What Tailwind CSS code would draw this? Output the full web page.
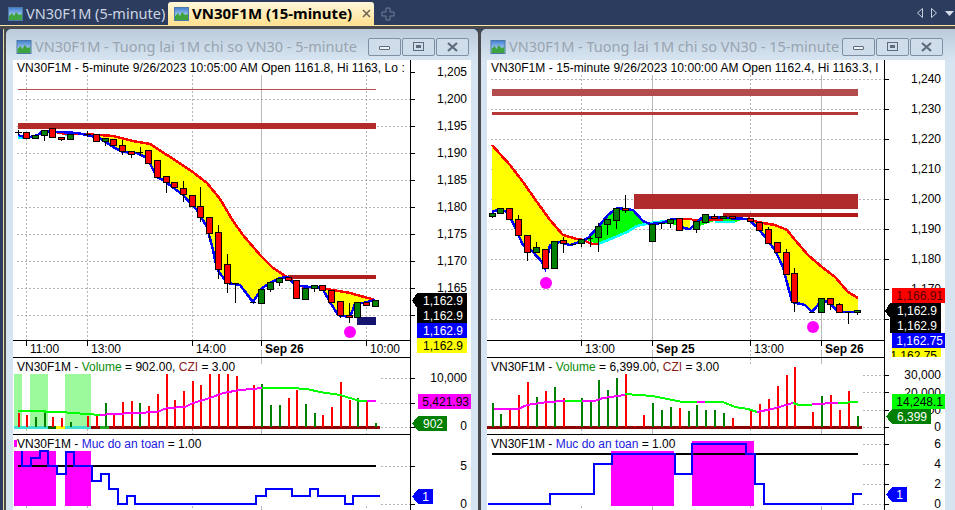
<!DOCTYPE html>
<html>
<head>
<meta charset="utf-8">
<script src="https://cdn.jsdelivr.net/npm/@tailwindcss/browser@4"></script>
</head>
<body class="m-0 overflow-hidden bg-[#2c3c5e]">
<div class="flex h-[510px] w-[955px] flex-col overflow-hidden font-['Liberation_Sans',sans-serif] text-black">

  <!-- document tabs -->
  <div class="flex h-[25px] shrink-0 items-end bg-[#2c3c5e] font-['Noto_Sans',sans-serif] text-[15px] leading-none">
    <div class="flex h-[23px] w-[168px] items-center gap-[3px] pl-[8px] text-[14.5px] whitespace-nowrap text-[#ccd6e3]">
      <svg width="15" height="14" viewBox="0 0 15 14" class="shrink-0"><defs><linearGradient id="sky" x1="0" y1="0" x2="0" y2="1"><stop offset="0" stop-color="#3f7fd0"/><stop offset="1" stop-color="#e8f4ff"/></linearGradient></defs><rect x=".5" y=".5" width="14" height="13" fill="url(#sky)" stroke="#4a78a8"/><path d="M1 13V9l3-3 2 3 2-4 3 3 3-1v6z" fill="#3fa43f"/></svg>
      <span>VN30F1M (5-minute)</span>
    </div>
    <div class="flex h-[23px] w-[206px] items-center gap-[3px] rounded-t-[3px] bg-gradient-to-b from-[#fff7dc] to-[#ffe08f] pl-[6px] font-bold whitespace-nowrap">
      <svg width="15" height="14" viewBox="0 0 15 14" class="shrink-0"><rect x=".5" y=".5" width="14" height="13" fill="url(#sky)" stroke="#4a78a8"/><path d="M1 13V9l3-3 2 3 2-4 3 3 3-1v6z" fill="#3fa43f"/></svg>
      <span>VN30F1M (15-minute)</span>
      <svg width="9" height="9" viewBox="0 0 9 9" class="ml-[7px] shrink-0"><path d="M1 1l7 7M8 1L1 8" stroke="#6b6450" stroke-width="1.5"/></svg>
    </div>
    <svg width="14" height="14" viewBox="0 0 14 14" class="mb-[4px] ml-[7px] shrink-0"><path d="M5 1h4v4h4v4H9v4H5V9H1V5h4z" fill="none" stroke="#6f7d95"/></svg>
    <div class="mb-[7px] ml-auto flex items-center gap-[8px] pr-[1px]">
      <svg width="6" height="10" viewBox="0 0 6 10"><path d="M5.5 .5v9L.5 5z" fill="none" stroke="#c8d2de"/></svg>
      <svg width="6" height="10" viewBox="0 0 6 10"><path d="M.5 .5v9l5-4.500z" fill="none" stroke="#c8d2de"/></svg>
      <svg width="9" height="5" viewBox="0 0 9 5"><path d="M0 0h9L4.500 5z" fill="#d5dde8"/></svg>
    </div>
  </div>
  <div class="h-px shrink-0 bg-[#ffe8a6]"></div>
  <div class="h-[3px] shrink-0 bg-[#4a4a4c]"></div>

  <div class="flex min-h-0 flex-1">
    <div class="w-[3px] shrink-0 bg-[#2c3c5e]"></div>
    <div class="w-px shrink-0 bg-[#e8d9a8]"></div>
    <div class="w-[2px] shrink-0 bg-[#4a4a4c]"></div>

    <!-- 5-minute window -->
    <div class="flex h-full w-[472px] shrink-0 flex-col rounded-tl-[5px] rounded-tr-[5px] bg-gradient-to-b from-[#bccbda] to-[#d6e4f1] to-[30px] px-[7px]">
      <div class="flex h-[31px] shrink-0 items-center pt-[4px]">
        <svg width="16" height="14" viewBox="0 0 15 14" class="ml-[3px] mr-[3px] shrink-0"><rect x=".5" y=".5" width="14" height="13" fill="url(#sky)" stroke="#4a78a8"/><path d="M1 13V9l3-3 2 3 2-4 3 3 3-1v6z" fill="#3fa43f"/></svg>
        <span class="font-['Noto_Sans',sans-serif] text-[14.5px] leading-none whitespace-nowrap text-[#98a4b0]">VN30F1M - Tuong lai 1M chi so VN30 - 5-minute</span>
        <div class="ml-auto flex gap-px pr-[2px]">
          <div class="flex h-[18px] w-[33px] items-center justify-center rounded-[2px] border border-[#7f90a4] bg-[#cfdcea]"><div class="mt-[3px] h-[4px] w-[11px] rounded-[1px] border border-[#5d6b7c] bg-[#eef3f8]"></div></div>
          <div class="flex h-[18px] w-[33px] items-center justify-center rounded-[2px] border border-[#7f90a4] bg-[#cfdcea]"><div class="flex h-[9px] w-[11px] items-center justify-center border border-[#5d6b7c]"><div class="h-[3px] w-[5px] bg-[#5d6b7c]"></div></div></div>
          <div class="flex h-[18px] w-[33px] items-center justify-center rounded-[2px] border border-[#7f90a4] bg-[#cfdcea]"><svg width="13" height="10" viewBox="0 0 13 10"><path d="M2 1l9 8M11 1L2 9" stroke="#5d6b7c" stroke-width="2.200"/></svg></div>
        </div>
      </div>
      <svg width="458" height="450" viewBox="13 60 458 450" shape-rendering="crispEdges" class="block shrink-0 bg-white text-[12px]">
        <g fill="none" stroke="#b4b4b4" stroke-dasharray="2 2">
          <path d="M17 99.500H410M17 126.500H410M17 153.500H410M17 180.500H410M17 207.500H410M17 234.500H410M17 261.500H410M17 288.500H410M17 315.500H410"/>
          <path d="M26.500 75V340M87.500 75V340M192.500 75V340M366.500 75V340"/>
          <path d="M26.500 429V434M87.500 429V434M192.500 429V434M366.500 429V434M26.500 506V510M87.500 506V510M192.500 506V510M366.500 506V510"/>
          <path d="M381 378.500H410M381 403.500H410M381 427.500H410M381 466.500H410M381 504.500H410"/>
        </g>
        <path d="M261.500 75V340M261.500 350V364M261.500 429V434M261.500 506V510" stroke="#b8b8b8" fill="none"/>
        <text x="17" y="72" class="tracking-[0.05px]">VN30F1M - 5-minute 9/26/2023 10:05:00 AM Open 1161.8, Hi 1163, Lo :</text>
        <rect x="18" y="89" width="358" height="1" fill="#b35050"/>
        <rect x="18" y="123" width="358" height="6" fill="#b22a2a"/>
        <rect x="288" y="275" width="88" height="4" fill="#b01e1e"/>
        <rect x="357" y="317" width="19" height="8" fill="#14146e"/>
        <polygon points="57,133 77,134 100,135 113,136 133,141 150,144 167,155 190,170 207,183 220,199 233,221 243,235 260,255 273,268 287,277 300,286 327,289 350,293 375,300 363,303 355,304 350,317 338,315 330,302 322,288 300,286 293,283 288,277 280,278 270,283 262,288 253,302 240,285 227,283 217,269 213,250 207,227 197,210 183,195 163,180 157,177 147,158 137,153 123,152 113,147 100,138 87,135 77,133" fill="#ffff00"/>
        <polygon points="18,135 27,138 23,139 18,139" fill="#00ffff"/>
        <polygon points="38,135 43,131 50,132 45,135" fill="#00ff00"/>
        <polygon points="60,134 76,133 76,135 66,136" fill="#00ffff"/>
        <polyline points="57,133 77,134 100,135 113,136 133,141 150,144 167,155 190,170 207,183 220,199 233,221 243,235 260,255 273,268 287,277 300,286 327,289 350,293 375,300" fill="none" stroke="#ff0000" stroke-width="2.500"/>
        <polyline points="18,135 27,138 38,135 43,131 77,133 87,135 100,138 113,147 123,152 137,153 147,158 157,177 163,180 183,195 197,210 207,227 213,250 217,269 227,283 240,285 253,302 262,288 270,283 280,278 288,277 293,283 300,286 322,288 330,302 338,315 350,317 355,304 363,303 375,300" fill="none" stroke="#0000ff" stroke-width="2.500"/>
        <path d="M15 132.500H22M18.500 130V135M84 134.500H91M87.500 131V137M136 152.500H143M140.500 147V156M232 283.500H239M235.500 283V303M250 302.500H256M44.500 135V141M61.500 139V141M105.500 141V146M122.500 140V155M131.500 154V158M166.500 182V193M183.500 181V202M200.500 187V222M209.500 233V240M218.500 225V279M227.500 254V293M270.500 289V292M279.500 282V286M314.500 288V292M340.500 315V318M349.500 303V323" stroke="#000" fill="none"/>
        <path d="M23.500 132.500h6v6h-6zM49.500 128.500h6v9h-6zM58.500 137.500h6v2h-6zM93.500 134.500h6v7h-6zM110.500 139.500h6v6h-6zM119.500 145.500h6v6h-6zM128.500 151.500h6v3h-6zM145.500 150.500h6v13h-6zM154.500 160.500h6v17h-6zM163.500 176.500h6v6h-6zM171.500 182.500h6v5h-6zM180.500 188.500h6v6h-6zM189.500 195.500h6v11h-6zM197.500 206.500h6v11h-6zM206.500 217.500h6v16h-6zM215.500 232.500h6v37h-6zM224.500 264.500h6v19h-6zM285.500 277.500h6v3h-6zM293.500 280.500h6v18h-6zM319.500 285.500h6v5h-6zM328.500 290.500h6v12h-6zM337.500 301.500h6v14h-6zM346.500 315.500h6v2h-6zM363.500 302.500h6v3h-6z" fill="#ff0000" stroke="#000"/>
        <path d="M32.500 135.500h6v3h-6zM41.500 130.500h6v5h-6zM67.500 134.500h6v5h-6zM102.500 138.500h6v3h-6zM258.500 289.500h6v14h-6zM267.500 282.500h6v7h-6zM276.500 278.500h6v4h-6zM302.500 288.500h6v11h-6zM311.500 285.500h6v3h-6zM354.500 302.500h6v15h-6zM372.500 300.500h6v6h-6z" fill="#008000" stroke="#000"/>
        <circle cx="350" cy="332" r="6" fill="#ff00ff" shape-rendering="auto"/>

        <!-- date axis -->
        <path d="M13 340.500H410M13 357.500H410M13 434.500H410M410.500 60V510" stroke="#000" fill="none"/>
        <path d="M26.500 340V346M87.500 340V346M192.500 340V346M261.500 340V346M366.500 340V346" stroke="#000"/>
        <text x="30" y="353">11:00</text><text x="91" y="353">13:00</text><text x="196" y="353">14:00</text><text x="265" y="353" font-weight="700">Sep 26</text><text x="370" y="353">10:00</text>

        <!-- price axis -->
        <path d="M410 72.500h5M410 99.500h5M410 126.500h5M410 153.500h5M410 180.500h5M410 207.500h5M410 234.500h5M410 261.500h5M410 288.500h5M410 315.500h5M410 378.500h5M410 403.500h5M410 427.500h5M410 466.500h5M410 504.500h5" stroke="#000"/>
        <g text-anchor="end">
          <text x="467" y="76">1,205</text><text x="467" y="103">1,200</text><text x="467" y="130">1,195</text><text x="467" y="157">1,190</text><text x="467" y="184">1,185</text><text x="467" y="211">1,180</text><text x="467" y="238">1,175</text><text x="467" y="265">1,170</text><text x="467" y="292">1,165</text>
          <polygon points="412,300.500 417,293 467,293 467,323 417,323 417,308" fill="#000"/>
          <rect x="417" y="323" width="50" height="15" fill="#0000ff"/>
          <rect x="417" y="338" width="50" height="15" fill="#ffff00"/>
          <text x="463" y="305" fill="#fff">1,162.9</text><text x="463" y="320" fill="#fff">1,162.9</text><text x="463" y="335" fill="#fff">1,162.9</text><text x="463" y="350">1,162.9</text>
          <text x="467" y="382">10,000</text>
          <text x="467" y="430">0</text>
          <rect x="418" y="394" width="53" height="15" fill="#ff00ff"/>
          <text x="469" y="406">5,421.93</text>
          <polygon points="412,423.500 418,416 447,416 447,431 418,431" fill="#008000"/>
          <text x="443" y="428" fill="#fff">902</text>
          <text x="467" y="470">5</text>
          <text x="467" y="508">0</text>
          <polygon points="412,496.500 418,489 433,489 433,504 418,504" fill="#0000ff"/>
          <text x="429" y="501" fill="#fff">1</text>
        </g>

        <!-- volume pane -->
        <path d="M14 374h8v53h-8zM30 374h18v53H30zM65 374h26v53H65z" fill="#9cf99c"/>
        <text x="17" y="371">VN30F1M - <tspan fill="#0a8a0a">Volume</tspan> = 902.00, <tspan fill="#8b1a1a">CZI</tspan> = 3.00</text>
        <rect x="14" y="426" width="366" height="3" fill="#8b0000"/>
        <path d="M14 426h16v3H14zM30 426h18v3H30zM65 426h26v3H65z" fill="#40e0d0"/>
        <rect x="48" y="426" width="8" height="3" fill="#006400"/>
        <rect x="56" y="426" width="9" height="3" fill="#ffff00"/>
        <rect x="100" y="426" width="9" height="3" fill="#22a822"/>
        <path d="M19 413V427M27 415V427M53 417V427M62 418V427M88 416V427M97 414V427M114 415V427M123 402V427M132 401V427M149 406V427M158 394V427M167 374V427M175 400V427M184 391V427M193 381V427M201 385V427M210 374V427M219 374V427M228 374V427M237 376V427M254 385V427M289 398V427M297 390V427M323 415V427M332 407V427M341 382V427M350 400V427M367 400V427" stroke="#ff0000" stroke-width="2"/>
        <path d="M36 417V427M45 411V427M71 422V427M106 403V427M140 403V427M262 384V427M271 405V427M280 405V427M306 404V427M315 413V427M358 398V427M376 423V427" stroke="#008000" stroke-width="2"/>
        <polyline points="18,411 45,411 45,412 62,412 71,413 88,414 100,415" fill="none" stroke="#00ff00" stroke-width="2"/>
        <polyline points="100,415 113,414 157,412 167,408 185,407 193,403 210,398 223,393 240,390 253,389 262,388" fill="none" stroke="#ff00ff" stroke-width="2"/>
        <polyline points="262,388 290,388 307,389 320,392 340,395 360,401 367,401" fill="none" stroke="#00ff00" stroke-width="2"/>
        <polyline points="367,401 376,401" fill="none" stroke="#ff00ff" stroke-width="2"/>

        <!-- safety pane -->
        <path d="M14 451h42v55H14zM65 451h26v55H65zM14 440h3v7h-3z" fill="#ff00ff"/>
        <text x="17" y="448">VN30F1M - <tspan fill="#2020e0">Muc do an toan</tspan> = 1.00</text>
        <rect x="18" y="465" width="358" height="2" fill="#000"/>
        <path d="M22 451V466H31V458H40V451H48V466H57V474H66V452H74V466H92V481H101V474H109V489H118V504H127V496H135V504H256V496H266V489H292V496H310V489H318V496H345V504H353V496H380" fill="none" stroke="#0000ff" stroke-width="2.500"/>
      </svg>
    </div>

    <div class="w-[3px] shrink-0 bg-[#4a4a4c]"></div>

    <!-- 15-minute window -->
    <div class="flex h-full w-[474px] shrink-0 flex-col rounded-tl-[5px] bg-gradient-to-b from-[#bccbda] to-[#d6e4f1] to-[30px] pl-[6px] pr-[10px]">
      <div class="flex h-[31px] shrink-0 items-center pt-[4px]">
        <svg width="16" height="14" viewBox="0 0 15 14" class="ml-[3px] mr-[3px] shrink-0"><rect x=".5" y=".5" width="14" height="13" fill="url(#sky)" stroke="#4a78a8"/><path d="M1 13V9l3-3 2 3 2-4 3 3 3-1v6z" fill="#3fa43f"/></svg>
        <span class="font-['Noto_Sans',sans-serif] text-[14.5px] leading-none whitespace-nowrap text-[#98a4b0]">VN30F1M - Tuong lai 1M chi so VN30 - 15-minute</span>
        <div class="ml-auto flex gap-px pr-[2px]">
          <div class="flex h-[18px] w-[33px] items-center justify-center rounded-[2px] border border-[#7f90a4] bg-[#cfdcea]"><div class="mt-[3px] h-[4px] w-[11px] rounded-[1px] border border-[#5d6b7c] bg-[#eef3f8]"></div></div>
          <div class="flex h-[18px] w-[33px] items-center justify-center rounded-[2px] border border-[#7f90a4] bg-[#cfdcea]"><div class="flex h-[9px] w-[11px] items-center justify-center border border-[#5d6b7c]"><div class="h-[3px] w-[5px] bg-[#5d6b7c]"></div></div></div>
          <div class="flex h-[18px] w-[33px] items-center justify-center rounded-[2px] border border-[#7f90a4] bg-[#cfdcea]"><svg width="13" height="10" viewBox="0 0 13 10"><path d="M2 1l9 8M11 1L2 9" stroke="#5d6b7c" stroke-width="2.200"/></svg></div>
        </div>
      </div>
      <svg width="458" height="450" viewBox="487 60 458 450" shape-rendering="crispEdges" class="block shrink-0 bg-white text-[12px]">
        <g fill="none" stroke="#b4b4b4" stroke-dasharray="2 2">
          <path d="M491 79.500H884M491 109.500H884M491 139.500H884M491 169.500H884M491 199.500H884M491 229.500H884M491 259.500H884M491 289.500H884M491 319.500H884"/>
          <path d="M581.500 75V340M750.500 75V340"/>
          <path d="M581.500 429V434M750.500 350V364M750.500 429V434M581.500 506V510M750.500 506V510"/>
          <path d="M863 375.500H884M863 392.500H884M863 410.500H884M863 427.500H884M863 444.500H884M863 464.500H884M863 484.500H884M863 504.500H884"/>
        </g>
        <path d="M652.500 75V340M821.500 75V340M652.500 350V364M821.500 350V364M652.500 429V434M821.500 429V434M652.500 506V510M821.500 506V510" stroke="#b8b8b8" fill="none"/>
        <text x="491" y="72" class="tracking-[0.05px]">VN30F1M - 15-minute 9/26/2023 10:00:00 AM Open 1162.4, Hi 1163.3, l</text>
        <rect x="492" y="89" width="366" height="7" fill="#b34d4d"/>
        <rect x="492" y="112" width="366" height="3" fill="#b83838"/>
        <rect x="634" y="194" width="224" height="15" fill="#b02c2c"/>
        <rect x="723" y="213" width="135" height="4" fill="#b31818"/>
        <polygon points="492,145 500,154 510,165 523,182 537,202 550,220 563,235 577,239 585,241 580,242 570,245 560,242 550,245 545,268 542,262 533,252 523,245 513,223 507,212 500,209 492,212" fill="#ffff00"/>
        <polygon points="588,238 598,227 608,215 617,208 633,210 643,221 650,224 637,226 627,232 613,238 598,244 588,241" fill="#00ff00"/>
        <polygon points="650,224 662,223 672,219 683,219 683,228 672,224" fill="#00ff00"/>
        <rect x="683" y="219" width="7" height="10" fill="#ffff00"/>
        <polygon points="690,229 697,222 703,217 720,217 748,218 735,222 723,222 715,221" fill="#00ff00"/>
        <polygon points="748,218 757,222 775,225 787,230 795,240 808,255 822,267 835,277 848,292 858,298 858,312 838,312 830,303 822,300 812,312 805,305 792,302 783,267 775,250 758,228" fill="#ffff00"/>
        <polyline points="598,244 613,238 627,232 637,226 650,223 667,221" fill="none" stroke="#00ffff" stroke-width="2.500"/>
        <polyline points="715,222 735,222" fill="none" stroke="#00ffff" stroke-width="2"/>
        <polyline points="492,145 500,154 510,165 523,182 537,202 550,220 563,235 577,239 583,240 592,244 598,244" fill="none" stroke="#ff0000" stroke-width="2.500"/>
        <polyline points="683,219 700,220 723,220" fill="none" stroke="#ff0000" stroke-width="2"/>
        <polyline points="748,218 757,222 775,225 787,230 795,240 808,255 822,267 835,277 848,292 858,298" fill="none" stroke="#ff0000" stroke-width="2.500"/>
        <polyline points="492,212 500,209 507,212 513,223 523,245 533,252 542,262 545,268 550,245 560,242 570,245 580,242 588,238 598,227 608,215 617,208 633,210 643,221 650,224 662,223 672,219 680,219 683,228 690,229 697,222 703,217 748,219 758,228 775,250 783,267 792,302 805,305 812,312 822,300 830,303 838,312 858,312" fill="none" stroke="#0000ff" stroke-width="2.500"/>
        <path d="M492.500 216V218M527.500 252V261M518.500 215V219M536.500 242V248M563.500 237V253M570 244.500H576M587 238.500H593M590.500 236V247M581.500 243V247M598.500 223V252M607.500 224V235M616.500 220V229M625.500 195V213M658 223.500H665M661.500 223V229M670.500 223V228M696.500 229V233M714.500 214V219M768.500 227V230M786.500 249V253M794.500 268V312M809 312.500H815M830.500 304V310M839.500 303V305M845 312.500H851M848.500 312V324M857.500 312V315" stroke="#000" fill="none"/>
        <path d="M506.500 208.500h6v11h-6zM515.500 219.500h6v16h-6zM524.500 235.500h6v17h-6zM542.500 249.500h6v19h-6zM560.500 240.500h6v3h-6zM622.500 208.500h6v2h-6zM676.500 218.500h6v12h-6zM711.500 216.500h6v2h-6zM729.500 216.500h6v2h-6zM747.500 218.500h6v3h-6zM756.500 222.500h6v8h-6zM765.500 229.500h6v14h-6zM774.500 242.500h6v10h-6zM783.500 252.500h6v22h-6zM791.500 273.500h6v29h-6zM827.500 298.500h6v6h-6zM836.500 304.500h6v8h-6z" fill="#ff0000" stroke="#000"/>
        <path d="M489.500 213.500h6v3h-6zM497.500 208.500h6v5h-6zM533.500 247.500h6v5h-6zM551.500 241.500h6v27h-6zM578.500 239.500h6v4h-6zM595.500 226.500h6v11h-6zM604.500 219.500h6v5h-6zM613.500 208.500h6v12h-6zM649.500 224.500h6v17h-6zM667.500 219.500h6v4h-6zM693.500 221.500h6v8h-6zM702.500 214.500h6v8h-6zM720.500 216.500h6v2h-6zM818.500 298.500h6v14h-6zM854.500 310.500h6v2h-6z" fill="#008000" stroke="#000"/>
        <circle cx="546" cy="283" r="6" fill="#ff00ff" shape-rendering="auto"/>
        <circle cx="813" cy="327" r="6" fill="#ff00ff" shape-rendering="auto"/>

        <!-- date axis -->
        <path d="M487 340.500H884M487 357.500H884M487 434.500H884M884.500 60V510" stroke="#000" fill="none"/>
        <path d="M581.500 340V346M652.500 340V346M750.500 340V346M821.500 340V346" stroke="#000"/>
        <text x="585" y="353">13:00</text><text x="656" y="353" font-weight="700">Sep 25</text><text x="754" y="353">13:00</text><text x="825" y="353" font-weight="700">Sep 26</text>

        <!-- price axis -->
        <path d="M884 79.500h5M884 109.500h5M884 139.500h5M884 169.500h5M884 199.500h5M884 229.500h5M884 259.500h5M884 289.500h5M884 319.500h5M884 375.500h5M884 392.500h5M884 410.500h5M884 427.500h5M884 444.500h5M884 464.500h5M884 484.500h5M884 504.500h5" stroke="#000"/>
        <g text-anchor="end">
          <text x="941" y="83">1,240</text><text x="941" y="113">1,230</text><text x="941" y="143">1,220</text><text x="941" y="173">1,210</text><text x="941" y="203">1,200</text><text x="941" y="233">1,190</text><text x="941" y="263">1,180</text><text x="941" y="293">1,170</text>
          <rect x="892" y="288" width="53" height="15" fill="#ff0000"/>
          <text x="943" y="300" fill="#5a0000">1,166.91</text>
          <polygon points="885,311 890,303 941,303 941,333 890,333 890,318" fill="#000"/>
          <text x="937" y="315" fill="#fff">1,162.9</text><text x="937" y="330" fill="#fff">1,162.9</text>
          <rect x="892" y="333" width="53" height="15" fill="#0000ff"/>
          <text x="943" y="345" fill="#fff">1,162.75</text>
          <rect x="892" y="348" width="49" height="9" fill="#ffff00"/>
          <svg x="892" y="348" width="53" height="9" viewBox="892 348 53 9" overflow="hidden"><text x="937" y="360">1,162.75</text></svg>
          <text x="941" y="379">30,000</text><text x="941" y="397">20,000</text><text x="941" y="414">10,000</text>
          <text x="941" y="431">0</text>
          <rect x="892" y="394" width="53" height="15" fill="#00ff00"/>
          <text x="943" y="406">14,248.1</text>
          <polygon points="886,416.500 892,409 931,409 931,424 892,424" fill="#008000"/>
          <text x="927" y="421" fill="#fff">6,399</text>
          <text x="941" y="448">6</text><text x="941" y="468">4</text><text x="941" y="488">2</text><text x="941" y="508">0</text>
          <polygon points="886,494.500 892,487 907,487 907,502 892,502" fill="#0000ff"/>
          <text x="903" y="499" fill="#fff">1</text>
        </g>

        <!-- volume pane -->
        <text x="491" y="371">VN30F1M - <tspan fill="#0a8a0a">Volume</tspan> = 6,399.00, <tspan fill="#8b1a1a">CZI</tspan> = 3.00</text>
        <rect x="487" y="426" width="375" height="3" fill="#8b0000"/>
        <path d="M510 410V427M519 395V427M528 382V427M546 391V427M564 398V427M626 374V427M635 426V427M644 415V427M680 408V427M733 418V427M751 410V427M760 404V427M769 399V427M778 386V427M787 375V427M795 367V427M813 412V427M831 395V427M840 410V427M849 391V427" stroke="#ff0000" stroke-width="2"/>
        <path d="M493 403V427M501 414V427M537 397V427M555 387V427M582 398V427M591 401V427M599 380V427M608 390V427M617 378V427M653 403V427M662 410V427M671 407V427M689 411V427M697 405V427M706 410V427M715 410V427M724 413V427M822 396V427M858 416V427" stroke="#008000" stroke-width="2"/>
        <polyline points="494,409 518,409 527,405 547,402 565,401" fill="none" stroke="#ff00ff" stroke-width="2"/>
        <polyline points="565,401 582,401" fill="none" stroke="#00ff00" stroke-width="2"/>
        <polyline points="582,401 595,401 603,398 625,395" fill="none" stroke="#ff00ff" stroke-width="2"/>
        <polyline points="625,394 653,396 662,398 683,402 723,402 735,407 748,409 757,412" fill="none" stroke="#00ff00" stroke-width="2"/>
        <polyline points="697,402 705,402" fill="none" stroke="#ff00ff" stroke-width="2"/>
        <polyline points="757,412 772,409 793,403" fill="none" stroke="#ff00ff" stroke-width="2"/>
        <polyline points="793,403 799,405 812,405" fill="none" stroke="#00ff00" stroke-width="2"/>
        <polyline points="812,404 838,403" fill="none" stroke="#ff00ff" stroke-width="2"/>
        <polyline points="838,403 858,402" fill="none" stroke="#00ff00" stroke-width="2"/>

        <!-- safety pane -->
        <path d="M611 451h63v55h-63zM692 441h62v65h-62z" fill="#ff00ff"/>
        <text x="491" y="448">VN30F1M - <tspan fill="#2020e0">Muc do an toan</tspan> = 1.00</text>
        <rect x="492" y="453" width="366" height="2" fill="#000"/>
        <path d="M488 504H550V494H594V464H612V454H675V474H692V444H746V454H755V484H764V504H853V494H862" fill="none" stroke="#0000ff" stroke-width="2.500"/>
      </svg>
    </div>
  </div>
</div>
</body>
</html>
